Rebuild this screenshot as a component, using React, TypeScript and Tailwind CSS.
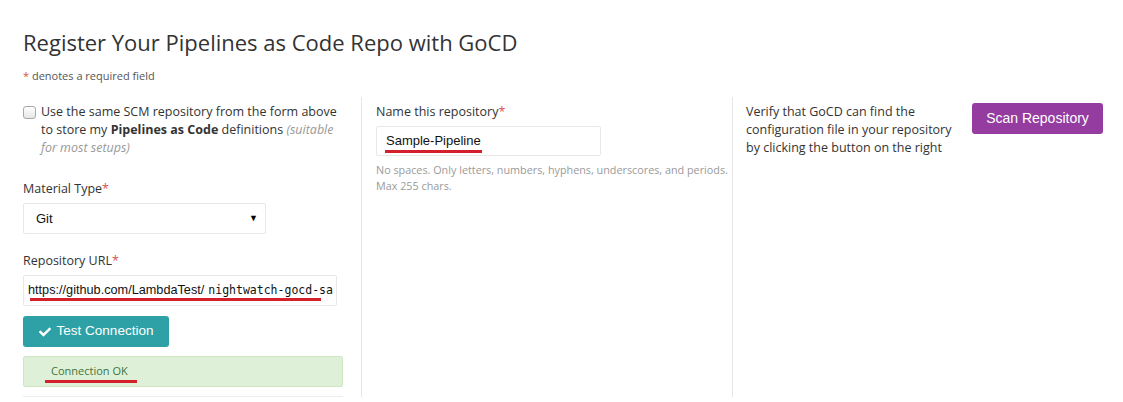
import React from "react";
import { FaCheck } from "react-icons/fa";

export default function App() {
  return (
    <div className="w-[1123px] h-[402px] bg-white overflow-hidden text-[#333] font-['Open_Sans',sans-serif]">
      <div className="pl-[23px] pt-[27px]">
        <h1 className="text-[22px] leading-[30px] font-normal text-[#333]">
          Register Your Pipelines as Code Repo with GoCD
        </h1>
        <div className="mt-[12px] text-[11px] leading-[14px] text-[#555]">
          <span className="text-[#d9534f]">*</span> denotes a required field
        </div>
      </div>

      <div className="flex mt-[14px] pl-[23px] h-[300px]">
        {/* Column 1 */}
        <div className="w-[338px] pt-[6px] pr-[10px]">
          <div className="flex items-start">
            <span className="mt-[3px] w-[13px] h-[13px] rounded-[3px] border border-[#a9a9a9] bg-gradient-to-b from-white to-[#e6e6e6] shrink-0" />
            <p className="ml-[5px] text-[12.5px] leading-[18px] text-[#333]">
              Use the same SCM repository from the form above to store my{" "}
              <b className="font-bold">Pipelines as Code</b> definitions{" "}
              <i className="text-[#999]">(suitable for most setups)</i>
            </p>
          </div>

          <div className="mt-[23px] text-[12.5px] leading-[18px]">
            Material Type<span className="text-[#d9534f]">*</span>
          </div>
          <div className="mt-[5px] w-[243px] h-[31px] border border-[#e8e8e8] rounded-[2px] flex items-center justify-between pl-[12px] pr-[7px] font-['Liberation_Sans',Arial,sans-serif] text-[13px] text-[#111]">
            <span>Git</span>
            <span className="text-[9px] text-black">▼</span>
          </div>

          <div className="mt-[18px] text-[12.5px] leading-[18px]">
            Repository URL<span className="text-[#d9534f]">*</span>
          </div>
          <div className="relative mt-[5px] w-[314px] h-[31px] border border-[#e8e8e8] rounded-[2px] flex items-center pl-[4px] overflow-hidden whitespace-nowrap text-[#111]">
            <span className="font-['Liberation_Sans',Arial,sans-serif] text-[12.7px]">https://github.com/LambdaTest/</span>
            <span className="ml-[4px] font-['DejaVu_Sans_Mono',monospace] text-[11.5px]">nightwatch-gocd-sa</span>
            <span className="absolute left-[6px] top-[22px] w-[291px] h-[3px] bg-[#d4202a]" />
          </div>

          <button className="mt-[10px] w-[146px] h-[31px] rounded-[3px] bg-[#2ea1a7] text-white flex items-center justify-center gap-[6px] font-['Liberation_Sans',Arial,sans-serif] text-[13.5px]">
            <FaCheck className="w-[12px] h-[12px]" />
            <span>Test Connection</span>
          </button>

          <div className="relative mt-[9px] w-[320px] h-[31px] rounded-[2px] border border-[#cfe6c3] bg-[#dff0d8] flex items-center pl-[27px] text-[11px] text-[#3c763d]">
            Connection OK
            <span className="absolute left-[21px] top-[23px] w-[92px] h-[3px] bg-[#d4202a]" />
          </div>
          <div className="mt-[9px] w-[320px] h-px bg-[#ececec]" />
        </div>

        {/* Column 2 */}
        <div className="w-[371px] border-l border-[#e6e6e6] pl-[14px] pt-[6px]">
          <div className="text-[12.5px] leading-[18px]">
            Name this repository<span className="text-[#d9534f]">*</span>
          </div>
          <div className="relative mt-[5px] w-[225px] h-[30px] border border-[#e8e8e8] rounded-[2px] flex items-center pl-[9px] font-['Liberation_Sans',Arial,sans-serif] text-[13px] text-[#111]">
            Sample-Pipeline
            <span className="absolute left-[8px] top-[23px] w-[97px] h-[3px] bg-[#d4202a]" />
          </div>
          <p className="mt-[6px] text-[10.8px] leading-[16px] text-[#9a9a9a] whitespace-nowrap">
            No spaces. Only letters, numbers, hyphens, underscores, and periods.
            <br />
            Max 255 chars.
          </p>
        </div>

        {/* Column 3 */}
        <div className="flex-1 border-l border-[#e6e6e6] pl-[13px] pt-[6px] flex items-start">
          <p className="w-[212px] text-[12.5px] leading-[18px] text-[#333]">
            Verify that GoCD can find the configuration file in your repository by clicking the button on the right
          </p>
          <button className="ml-[14px] w-[131px] h-[31px] rounded-[3px] bg-[#943c9f] text-white font-['Liberation_Sans',Arial,sans-serif] text-[14px]">
            Scan Repository
          </button>
        </div>
      </div>
    </div>
  );
}
